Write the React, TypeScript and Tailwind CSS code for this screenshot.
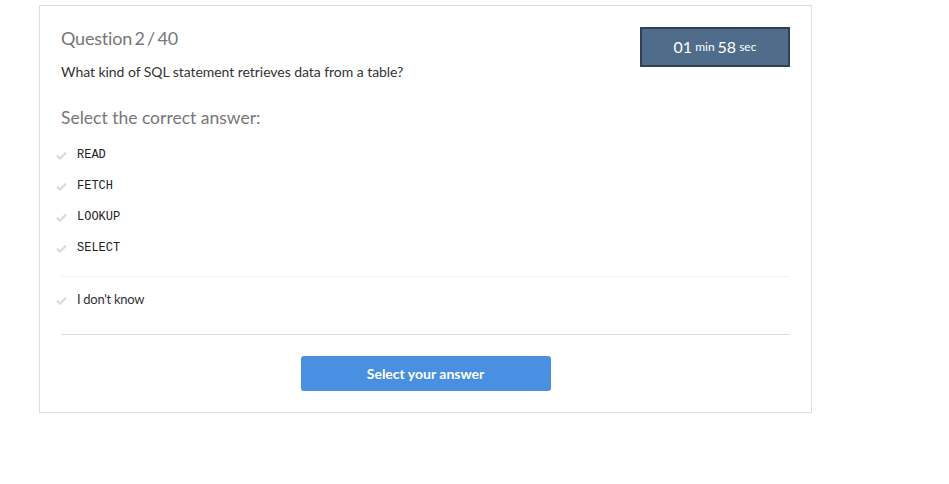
import React from 'react';

const options = ['READ', 'FETCH', 'LOOKUP', 'SELECT'];

const Check: React.FC = () => (
  <svg width="11" height="9" viewBox="0 0 12 10" className="shrink-0 text-[#dcdcdc]">
    <path d="M1 5.2 L4.3 8.5 L11 1.8" fill="none" stroke="currentColor" strokeWidth="2.6" />
  </svg>
);

export default function App() {
  return (
    <div className="min-h-screen bg-white font-['Lato',sans-serif]">
      <div className="ml-[39px] mt-[5px] w-[773px] h-[408px] border border-[#dddddd] bg-white px-[21px] pt-[21px]">
        <div className="flex justify-between items-start">
          <div>
            <h2 className="text-[18px] leading-[22px] text-[#777777] [word-spacing:-2px] tracking-[-0.2px]">Question 2 / 40</h2>
            <p className="mt-[14px] text-[14px] leading-[17px] text-[#333333] tracking-[-0.05px]">
              What kind of SQL statement retrieves data from a table?
            </p>
          </div>
          <div className="w-[150px] h-[40px] bg-[#4f6d8a] border-2 border-[#2f4050] flex items-center justify-center text-white">
            <span className="text-[16px]">01</span>
            <span className="text-[12px] ml-[3px]">min</span>
            <span className="text-[16px] ml-[3px]">58</span>
            <span className="text-[12px] ml-[3px]">sec</span>
          </div>
        </div>
        <h3 className="mt-[27px] text-[17.5px] leading-[22px] text-[#777777]">Select the correct answer:</h3>
        <ul className="mt-[17px] flex flex-col gap-[13px]">
          {options.map((o) => (
            <li key={o} className="flex items-center h-[18px] -ml-[5px]">
              <Check />
              <span className="ml-[10px] font-['Liberation_Mono',monospace] font-normal text-[12px] text-[#222222]">{o}</span>
            </li>
          ))}
        </ul>
        <div className="mt-[19px] border-t border-[#f2f2f2]" />
        <div className="mt-[14px] flex items-center h-[18px] -ml-[5px]">
          <Check />
          <span className="ml-[10px] text-[13px] text-[#333333] tracking-[-0.3px]">I don't know</span>
        </div>
        <div className="mt-[25px] border-t border-[#dddddd]" />
        <div className="mt-[21px] flex justify-center">
          <button className="w-[250px] h-[35px] rounded-[3px] bg-[#4a90e2] text-white text-[14px] font-bold">
            Select your answer
          </button>
        </div>
      </div>
    </div>
  );
}
